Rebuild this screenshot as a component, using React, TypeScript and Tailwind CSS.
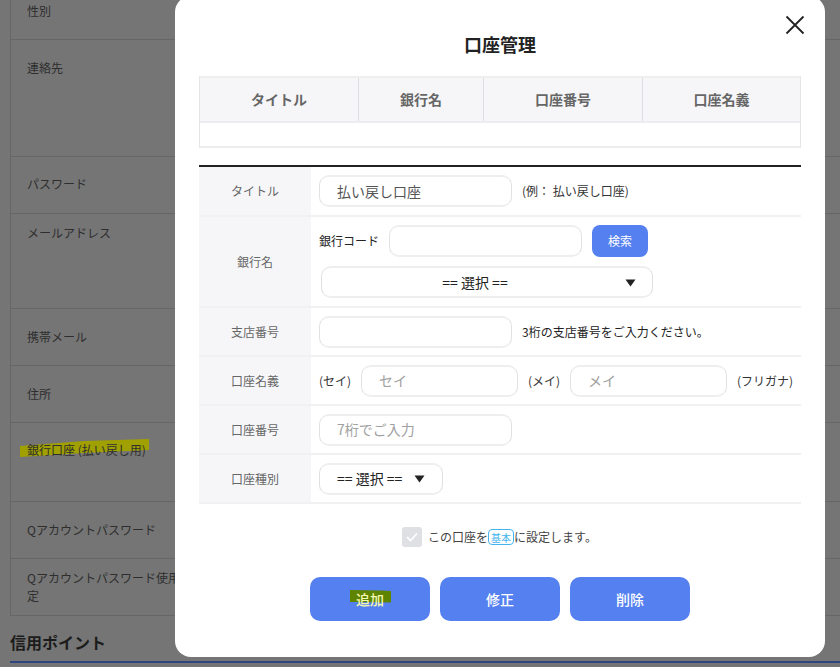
const font = { fontFamily: '"Noto Sans CJK JP", "Noto Sans", sans-serif' };

const pageRows = [
  { label: "性別", h: "h-[40px]", pt: "pt-[2px]" },
  { label: "連絡先", h: "h-[117px]", pt: "pt-[19px]" },
  { label: "パスワード", h: "h-[57px]", pt: "pt-[18px]" },
  { label: "メールアドレス", h: "h-[95px]", pt: "pt-[10px]" },
  { label: "携帯メール", h: "h-[57px]", pt: "pt-[19px]" },
  { label: "住所", h: "h-[57px]", pt: "pt-[19px]" },
];

const bottomRows = [
  { label: "Qアカウントパスワード", h: "h-[57px]", pt: "pt-[19px]" },
  { label: "Qアカウントパスワード使用設定", h: "h-[57px]", pt: "pt-[10px]" },
];

function PageRow({ label, h, pt }: { label: string; h: string; pt: string }) {
  return (
    <div className={`${h} ${pt} border-b border-[#666] pl-[16px] text-[12px] leading-[18px] text-[#2e2e2e]`}>
      <div className="w-[176px]">{label}</div>
    </div>
  );
}

function Input({ w, value, placeholder }: { w: string; value?: string; placeholder?: string }) {
  return (
    <div
      className={`${w} flex h-[32px] shrink-0 items-center rounded-[10px] border border-[#e2e2e5] border-t-2 border-b-2 border-t-[#eeeeef] border-b-[#eeeeef] bg-white pl-[17px] text-[14px] ${
        value ? "text-[#555]" : "text-[#a0a0a0]"
      }`}
    >
      {value || placeholder}
    </div>
  );
}

function Select({ className, center }: { className: string; center?: boolean }) {
  return (
    <div
      className={`${className} flex h-[32px] shrink-0 items-center rounded-[10px] border border-[#e0e0e4] border-t-2 border-b-2 border-t-[#eeeeef] border-b-[#eeeeef] bg-white text-[14px] text-[#222]`}
    >
      <span className={center ? "w-[306px] text-center" : "pl-[17px]"}>== 選択 ==</span>
      <svg width="11" height="8" viewBox="0 0 11 8" className={center ? "ml-[-3px] mt-[2px]" : "ml-[12px]"}>
        <path d="M0.5 0.5h10L5.5 7.5z" fill="#222" />
      </svg>
    </div>
  );
}

function FormRow({ label, h, children }: { label: string; h: string; children: React.ReactNode }) {
  return (
    <div className={`${h} grid grid-cols-[112px_1fr] border-b-2 border-[#f1f1f3]`}>
      <div className="flex items-center justify-center bg-[#f6f6f9] text-[12px] text-[#666]">{label}</div>
      <div className="flex items-center pl-[8px] text-[12px] text-[#333]">{children}</div>
    </div>
  );
}

function ActionButton({ label, mark }: { label: string; mark?: boolean }) {
  return (
    <div className="relative flex h-[44px] w-[120px] items-center justify-center rounded-[10px] bg-[#5580f0] text-[14px] font-medium text-white">
      {mark && (
        <svg width="42" height="14" viewBox="0 0 42 14" className="absolute left-[40px] top-[13px]">
          <path d="M0 0L31 0.5L41 1V12.5L0 12z" fill="#5f8500" />
        </svg>
      )}
      <span className={mark ? "relative text-[#f6f9b0]" : ""}>{label}</span>
    </div>
  );
}

export default function App() {
  return (
    <div className="relative h-[667px] w-[840px] overflow-hidden bg-[#757575]" style={font}>
      {/* page behind the dialog */}
      <div className="ml-[10px] border-l border-[#666]">
        {pageRows.map((r) => (
          <PageRow key={r.label} {...r} />
        ))}
        <div className="h-[79px] border-b border-[#666] pl-[16px] pt-[18px] text-[12px] leading-[18px] text-[#2e2e2e]">
          <div className="relative w-[164px]">
            <svg width="130" height="19" viewBox="0 0 130 19" className="absolute left-[-7px] top-[-2px]">
              <path d="M0 7L64 2L129 0V11L64 14L0 18z" fill="#a0a000" />
            </svg>
            <span className="relative">銀行口座 (払い戻し用)</span>
          </div>
        </div>
        {bottomRows.map((r) => (
          <PageRow key={r.label} {...r} />
        ))}
      </div>
      <div className="ml-[10px] mt-[14px] text-[16px] font-bold leading-[24px] text-[#1c1c1c]">信用ポイント</div>
      <div className="ml-[10px] mt-[7px] h-[2px] bg-[#2f4580]" />

      {/* dialog */}
      <div className="absolute left-[175px] top-[-4px] h-[661px] w-[650px] rounded-2xl bg-white px-[24px] pt-[35px]">
        <svg width="20" height="20" viewBox="0 0 20 20" className="absolute right-[20px] top-[19px]">
          <path d="M1.5 1.5L18.5 18.5M18.5 1.5L1.5 18.5" stroke="#222" strokeWidth="1.8" fill="none" />
        </svg>
        <div className="text-center text-[18px] font-bold leading-[27px] text-[#222]">口座管理</div>

        <div className="mt-[18px] border border-t-2 border-[#e4e4e8] border-t-[#eeeeef] border-b-2 border-b-[#ededf0]">
          <div className="grid h-[45px] grid-cols-[159px_125px_159px_1fr] border-b-2 border-[#ededf0] bg-[#f6f6f9] text-[14px] font-bold text-[#666]">
            <div className="flex items-center justify-center border-r border-[#dedee2]">タイトル</div>
            <div className="flex items-center justify-center border-r border-[#dedee2]">銀行名</div>
            <div className="flex items-center justify-center border-r border-[#dedee2]">口座番号</div>
            <div className="flex items-center justify-center">口座名義</div>
          </div>
          <div className="h-[23px]" />
        </div>

        <div className="mt-[17px] border-t-2 border-[#222]">
          <FormRow label="タイトル" h="h-[50px]">
            <Input w="w-[193px]" value="払い戻し口座" />
            <span className="ml-[10px]">(例： 払い戻し口座)</span>
          </FormRow>
          <FormRow label="銀行名" h="h-[91px]">
            <div className="flex flex-col gap-[9px]">
              <div className="flex items-center">
                <span className="w-[70px] text-[#222]">銀行コード</span>
                <Input w="w-[193px]" />
                <div className="ml-[10px] flex h-[32px] w-[56px] items-center justify-center rounded-[8px] bg-[#5580f0] text-[12px] text-white">
                  検索
                </div>
              </div>
              <Select className="ml-[2px] w-[332px]" center />
            </div>
          </FormRow>
          <FormRow label="支店番号" h="h-[49px]">
            <Input w="w-[193px]" />
            <span className="ml-[10px] text-[#222]">3桁の支店番号をご入力ください。</span>
          </FormRow>
          <FormRow label="口座名義" h="h-[49px]">
            <span className="w-[42px]">(セイ)</span>
            <Input w="w-[157px]" placeholder="セイ" />
            <span className="ml-[10px] w-[42px]">(メイ)</span>
            <Input w="w-[157px]" placeholder="メイ" />
            <span className="ml-[10px]">(フリガナ)</span>
          </FormRow>
          <FormRow label="口座番号" h="h-[49px]">
            <Input w="w-[193px]" placeholder="7桁でご入力" />
          </FormRow>
          <FormRow label="口座種別" h="h-[49px]">
            <Select className="w-[124px]" />
          </FormRow>
        </div>

        <div className="mt-[23px] flex items-center justify-center pr-[1px] text-[12px] text-[#444]">
          <div className="mr-[6px] flex h-[20px] w-[20px] items-center justify-center rounded-[3px] bg-[#dfe0e4]">
            <svg width="12" height="10" viewBox="0 0 12 10">
              <path d="M1 5L4.5 8.5L11 1.5" stroke="#fff" strokeWidth="1.6" fill="none" />
            </svg>
          </div>
          この口座を
          <span className="flex h-[16px] w-[26px] items-center justify-center rounded-[4px] border border-[#45b4ee] text-[10px] text-[#45b4ee]">
            基本
          </span>
          に設定します。
        </div>

        <div className="mt-[30px] flex justify-center gap-[10px]">
          <ActionButton label="追加" mark />
          <ActionButton label="修正" />
          <ActionButton label="削除" />
        </div>
      </div>
    </div>
  );
}
